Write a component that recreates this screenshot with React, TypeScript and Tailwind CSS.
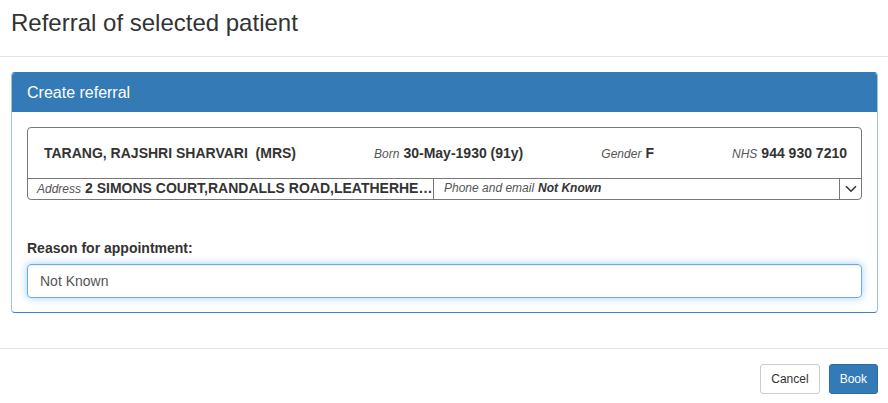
import { useState } from "react";

const font = { fontFamily: '"Liberation Sans", Arial, Helvetica, sans-serif' };

function Chevron() {
  return (
    <svg width="12" height="8" viewBox="0 0 12 8" fill="none">
      <path d="M1 1.2 L6 6.2 L11 1.2" stroke="#333" strokeWidth="1.6" />
    </svg>
  );
}

function PatientBanner() {
  return (
    <div className="border border-[#777] rounded-[4px] text-[#333]">
      {/* Top row */}
      <div className="h-[50px] flex items-center justify-between pl-4 pr-[14px]">
        <span className="text-[14px] font-bold whitespace-pre">TARANG, RAJSHRI SHARVARI  (MRS)</span>
        <span className="flex items-baseline gap-1">
          <span className="text-[12px] italic text-[#555]">Born</span>
          <span className="text-[14px] font-bold">30-May-1930 (91y)</span>
        </span>
        <span className="flex items-baseline gap-1">
          <span className="text-[12px] italic text-[#555]">Gender</span>
          <span className="text-[14px] font-bold">F</span>
        </span>
        <span className="flex items-baseline gap-1">
          <span className="text-[12px] italic text-[#555]">NHS</span>
          <span className="text-[14px] font-bold">944 930 7210</span>
        </span>
      </div>

      {/* Bottom row */}
      <div className="h-[21px] flex border-t border-[#777] leading-[18px]">
        <div className="w-[406px] shrink-0 border-r border-[#777] pl-[9px] pr-1 flex items-baseline gap-1 min-w-0 whitespace-nowrap">
          <span className="text-[12px] italic text-[#555]">Address</span>
          <span className="text-[14px] font-bold">2 SIMONS COURT,RANDALLS ROAD,LEATHERHE…</span>
        </div>
        <div className="flex-1 pl-[10px] flex items-baseline gap-1 text-[12px] italic border-r border-[#777]">
          <span className="text-[#555]">Phone and email</span>
          <span className="font-bold text-[#333]">Not Known</span>
        </div>
        <div className="w-[21px] shrink-0 flex items-center justify-center">
          <Chevron />
        </div>
      </div>
    </div>
  );
}

export default function App() {
  const [reason, setReason] = useState("Not Known");

  return (
    <div className="w-[888px] h-[403px] bg-white text-[#333] overflow-hidden" style={font}>

      {/* Modal header */}
      <div className="h-[57px] border-b border-[#e5e5e5] pt-[10px] pl-[11px]">
        <h1 className="text-[24px] leading-[1.1] text-[#333]">Referral of selected patient</h1>
      </div>

      {/* Panel */}
      <div className="pl-[11px] pr-[10px] pt-[15px]">
        <div className="rounded-[4px] border border-[#9cc2e5] border-b-[#3f84c2] border-t-[#337ab7]">
          <div className="h-[39px] bg-[#337ab7] rounded-t-[3px] flex items-center pl-[15px] text-white text-[16px]">
            Create referral
          </div>
          <div className="px-[15px] pt-[15px] pb-[14px]">
            <PatientBanner />

            <div className="mt-[38px] text-[14px] font-bold leading-5 mb-[6px]">Reason for appointment:</div>
            <input
              value={reason}
              onChange={e => setReason(e.target.value)}
              className="w-full h-[34px] px-3 text-[14px] text-[#555] rounded-[4px] border border-[#66afe9] outline-none shadow-[inset_0_1px_1px_rgba(0,0,0,0.075),0_0_8px_rgba(102,175,233,0.6)]"
              style={font}
            />
          </div>
        </div>
      </div>

      {/* Footer */}
      <div className="mt-[35px] border-t border-[#e5e5e5] pt-[15px] pr-[10px] flex justify-end gap-[9px]">
        <button className="h-[30px] px-[10px] text-[12px] text-[#333] bg-white border border-[#ccc] rounded-[3px]" style={font}>
          Cancel
        </button>
        <button className="h-[30px] px-[10px] text-[12px] text-white bg-[#337ab7] border border-[#2e6da4] rounded-[3px]" style={font}>
          Book
        </button>
      </div>

    </div>
  );
}
